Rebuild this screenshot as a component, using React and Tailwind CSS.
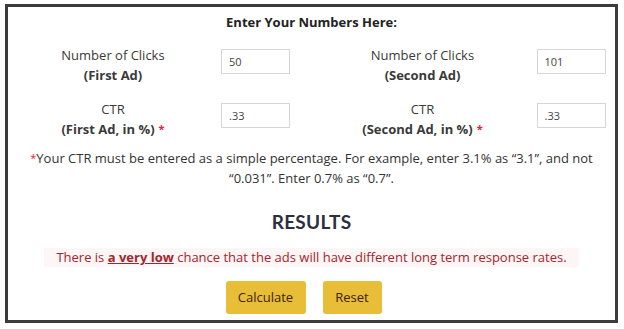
const Field = ({ title, sub, value, required, gap }) => (
  <div className="flex items-start">
    <div className="w-[210px] text-center text-[13px] leading-[20px] text-[#3a3a3a]">
      <div>{title}</div>
      <div className="font-bold">
        {sub}
        {required && <span className="text-[#e0243c] ml-1 text-[11px] align-top">*</span>}
      </div>
    </div>
    <input
      readOnly
      value={value}
      className={`${gap} mt-[4px] w-[69px] h-[25px] border border-[#d6d6d6] bg-white px-[7px] text-[11px] text-[#444] outline-none`}
    />
  </div>
);

const App = () => {
  return (
    <div className="w-[624px] h-[329px] bg-white pt-[4px] pl-[5px]" style={{ fontFamily: '"Open Sans", "Liberation Sans", sans-serif' }}>
      <div className="w-[613px] h-[319px] border-[3px] border-[#3b3b3b] flex flex-col items-center">
        <h2 className="mt-[6px] text-[13px] font-bold text-[#222]">Enter Your Numbers Here:</h2>

        <div className="mt-[12px] w-full grid grid-cols-2">
          <div className="flex flex-col gap-[14px]">
            <Field title="Number of Clicks" sub="(First Ad)" value="50" gap="ml-[3px]" />
            <Field title="CTR" sub="(First Ad, in %)" value=".33" gap="ml-[3px]" required />
          </div>
          <div className="flex flex-col gap-[14px] pl-[6px]">
            <Field title="Number of Clicks" sub="(Second Ad)" value="101" gap="ml-[9px]" />
            <Field title="CTR" sub="(Second Ad, in %)" value=".33" gap="ml-[9px]" required />
          </div>
        </div>

        <p className="mt-[9px] px-[18px] text-center text-[13px] leading-[20px] text-[#333]">
          <span className="text-[#e0243c] text-[11px] align-top">*</span>Your CTR must be entered as a simple percentage. For example, enter 3.1% as “3.1”, and not “0.031”. Enter 0.7% as “0.7”.
        </p>

        <h3 className="mt-[20px] text-[19px] font-bold tracking-[0.3px] text-[#2b2f3e]" style={{ fontFamily: 'Lato, sans-serif' }}>
          RESULTS
        </h3>

        <p className="mt-[12px] bg-[#fdf5f6] px-[12px] py-[1px] text-[13px] leading-[17px] text-[#a3262c]">
          There is <span className="font-bold underline">a very low</span> chance that the ads will have different long term response rates.
        </p>

        <div className="mt-[14px] mr-[16px] flex gap-[17px]">
          <button className="w-[80px] h-[33px] rounded-[3px] bg-[#e8bd38] text-[13px] text-[#3d2207]">Calculate</button>
          <button className="w-[59px] h-[33px] rounded-[3px] bg-[#e8bd38] text-[13px] text-[#3d2207]">Reset</button>
        </div>
      </div>
    </div>
  );
};

export default App;
